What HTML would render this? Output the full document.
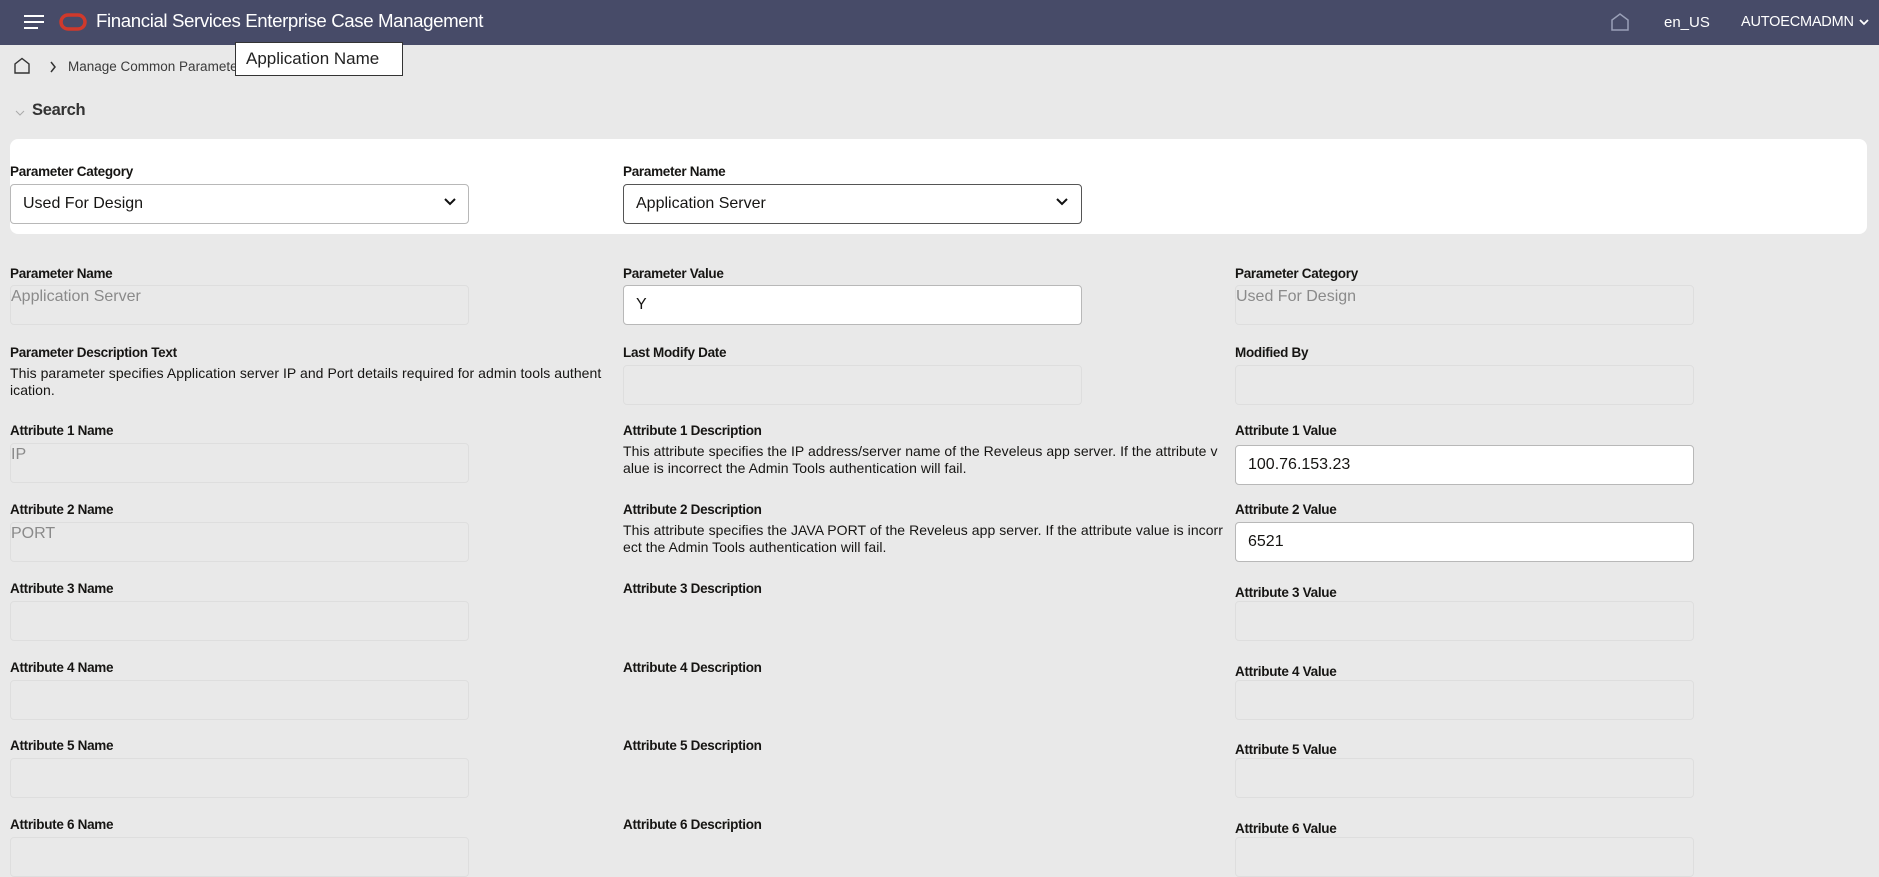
<!DOCTYPE html>
<html><head><meta charset="utf-8"><style>
*{box-sizing:border-box;margin:0;padding:0}
body{width:1879px;height:862px;overflow:hidden;background:#e9e9e9;font-family:"Liberation Sans",sans-serif;color:#161513;position:relative}
.hdr{position:absolute;left:0;top:0;width:1879px;height:45px;background:#474b68}
.a{position:absolute;white-space:nowrap}
.lbl{position:absolute;font-size:13.5px;font-weight:bold;color:#161513;letter-spacing:-0.3px}
.ro{position:absolute;width:459px;height:40px;border:1px solid #dedede;border-radius:4px;background:#e9e9e9;color:#8a8a8a;font-size:16px;padding:2px 0 0 0}
.in{position:absolute;width:459px;height:40px;border:1px solid #b8b8b8;border-radius:4px;background:#fff;font-size:16px;padding:10px 12px}
.desc{position:absolute;font-size:14px;line-height:17px;white-space:nowrap;letter-spacing:0.05px;color:#161513}
</style></head><body>
<div class="hdr"></div>
<svg class="a" style="left:23px;top:14px" width="22" height="16"><path d="M1 2H21M1 8H21M1 14H15" stroke="#fff" stroke-width="2"/></svg>
<svg class="a" style="left:59px;top:12px" width="28" height="20"><rect x="2" y="3" width="24" height="14" rx="7" fill="none" stroke="#d0392b" stroke-width="3.5"/></svg>
<div class="a" style="left:96px;top:10px;color:#fff;font-size:18.7px;letter-spacing:-0.4px">Financial Services Enterprise Case Management</div>
<svg class="a" style="left:1610px;top:12px" width="20" height="20"><path d="M2 18V8L10 2L18 8V18Z" fill="none" stroke="#9aa0b8" stroke-width="1.5"/></svg>
<div class="a" style="left:1664px;top:14px;color:#fff;font-size:15px">en_US</div>
<div class="a" style="left:1741px;top:14px;color:#fff;font-size:14.5px;letter-spacing:-0.2px">AUTOECMADMN</div>
<svg class="a" style="left:1858px;top:18px" width="12" height="8"><path d="M2 2L6 6L10 2" fill="none" stroke="#fff" stroke-width="1.8"/></svg>

<svg class="a" style="left:13px;top:57px" width="18" height="18"><path d="M2 16V7L9 1.5L16 7V16Z" fill="none" stroke="#333" stroke-width="1.4"/></svg>
<svg class="a" style="left:49px;top:61px" width="8" height="12"><path d="M2 1L6 6L2 11" fill="none" stroke="#333" stroke-width="1.5"/></svg>
<div class="a" style="left:68px;top:59px;font-size:13.5px;color:#3b3b3b">Manage Common Parameters</div>
<div class="a" style="left:235px;top:42px;width:168px;height:34px;background:#fff;border:1px solid #333;font-size:17px;padding:6px 10px;color:#222">Application Name</div>

<svg class="a" style="left:14px;top:108px" width="12" height="10"><path d="M2 3L6 7L10 3" fill="none" stroke="#aaa" stroke-width="1"/></svg>
<div class="a" style="left:32px;top:101px;font-size:16.5px;font-weight:bold;color:#333;letter-spacing:-0.3px">Search</div>

<div class="a" style="left:10px;top:139px;width:1857px;height:95px;background:#fff;border-radius:8px"></div>
<div class="lbl" style="left:10px;top:164px">Parameter Category</div>
<div class="in" style="left:10px;top:184px">Used For Design</div>
<svg class="a" style="left:443px;top:197px" width="14" height="10"><path d="M2 2L7 7L12 2" fill="none" stroke="#111" stroke-width="2"/></svg>
<div class="lbl" style="left:623px;top:164px">Parameter Name</div>
<div class="in" style="left:623px;top:184px;border-color:#555">Application Server</div>
<svg class="a" style="left:1055px;top:197px" width="14" height="10"><path d="M2 2L7 7L12 2" fill="none" stroke="#111" stroke-width="2"/></svg>

<div class="lbl" style="left:10px;top:266px">Parameter Name</div>
<div class="ro" style="left:10px;top:285px;color:#8a8a8a">Application Server</div>
<div class="lbl" style="left:623px;top:266px">Parameter Value</div>
<div class="in" style="left:623px;top:285px">Y</div>
<div class="lbl" style="left:1235px;top:266px">Parameter Category</div>
<div class="ro" style="left:1235px;top:285px">Used For Design</div>

<div class="lbl" style="left:10px;top:345px">Parameter Description Text</div>
<div class="desc" style="left:10px;top:365px">This parameter specifies Application server IP and Port details required for admin tools authent<br>ication.</div>
<div class="lbl" style="left:623px;top:345px">Last Modify Date</div>
<div class="ro" style="left:623px;top:365px"></div>
<div class="lbl" style="left:1235px;top:345px">Modified By</div>
<div class="ro" style="left:1235px;top:365px"></div>

<div class="lbl" style="left:10px;top:423px">Attribute 1 Name</div>
<div class="ro" style="left:10px;top:443px">IP</div>
<div class="lbl" style="left:623px;top:423px">Attribute 1 Description</div>
<div class="desc" style="left:623px;top:443px">This attribute specifies the IP address/server name of the Reveleus app server. If the attribute v<br>alue is incorrect the Admin Tools authentication will fail.</div>
<div class="lbl" style="left:1235px;top:423px">Attribute 1 Value</div>
<div class="in" style="left:1235px;top:445px">100.76.153.23</div>

<div class="lbl" style="left:10px;top:502px">Attribute 2 Name</div>
<div class="ro" style="left:10px;top:522px">PORT</div>
<div class="lbl" style="left:623px;top:502px">Attribute 2 Description</div>
<div class="desc" style="left:623px;top:522px">This attribute specifies the JAVA PORT of the Reveleus app server. If the attribute value is incorr<br>ect the Admin Tools authentication will fail.</div>
<div class="lbl" style="left:1235px;top:502px">Attribute 2 Value</div>
<div class="in" style="left:1235px;top:522px">6521</div>

<div class="lbl" style="left:10px;top:581px">Attribute 3 Name</div>
<div class="ro" style="left:10px;top:601px"></div>
<div class="lbl" style="left:623px;top:581px">Attribute 3 Description</div>
<div class="lbl" style="left:1235px;top:585px">Attribute 3 Value</div>
<div class="ro" style="left:1235px;top:601px"></div>

<div class="lbl" style="left:10px;top:660px">Attribute 4 Name</div>
<div class="ro" style="left:10px;top:680px"></div>
<div class="lbl" style="left:623px;top:660px">Attribute 4 Description</div>
<div class="lbl" style="left:1235px;top:664px">Attribute 4 Value</div>
<div class="ro" style="left:1235px;top:680px"></div>

<div class="lbl" style="left:10px;top:738px">Attribute 5 Name</div>
<div class="ro" style="left:10px;top:758px"></div>
<div class="lbl" style="left:623px;top:738px">Attribute 5 Description</div>
<div class="lbl" style="left:1235px;top:742px">Attribute 5 Value</div>
<div class="ro" style="left:1235px;top:758px"></div>

<div class="lbl" style="left:10px;top:817px">Attribute 6 Name</div>
<div class="ro" style="left:10px;top:837px"></div>
<div class="lbl" style="left:623px;top:817px">Attribute 6 Description</div>
<div class="lbl" style="left:1235px;top:821px">Attribute 6 Value</div>
<div class="ro" style="left:1235px;top:837px"></div>
</body></html>
